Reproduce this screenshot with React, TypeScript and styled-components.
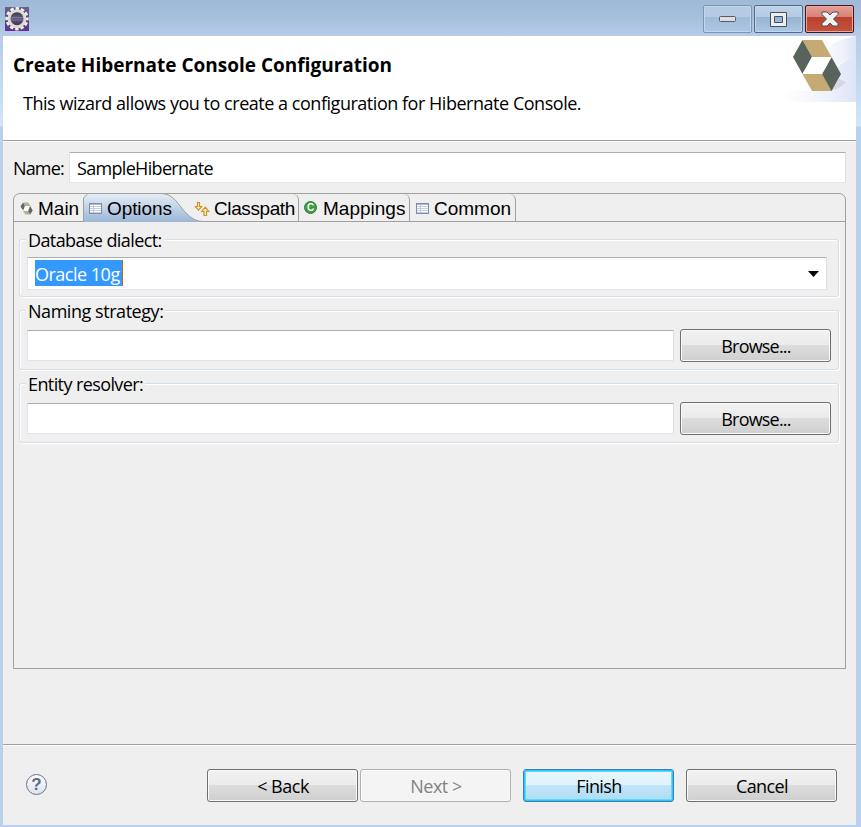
import React from 'react';
import styled, { createGlobalStyle, css } from 'styled-components';

const Global = createGlobalStyle`
  html, body { margin: 0; padding: 0; }
  body { overflow: hidden; background: #efefef; }
  * { box-sizing: border-box; }
  svg { display: block; flex: none; }
`;

const Window = styled.div`
  width: 861px;
  height: 827px;
  padding: 0 5px 2px 3px;
  display: flex;
  flex-direction: column;
  color: #000;
  font: 18px/24px 'Open Sans', 'Noto Sans', sans-serif;
  background: linear-gradient(#9fbad8 0, #a5c0dd 18px, #b6cde7 36px, #c6dbf1 90px, #d4e5f7 126px, #b9d1ec 127px, #b9d1ec 100%);
`;

const Text = styled.span<{ $ls?: number }>`
  white-space: pre;
  letter-spacing: ${p => p.$ls ?? -0.6}px;
`;

const TitleBar = styled.header`
  height: 36px;
  flex: none;
  display: flex;
  justify-content: space-between;
  padding: 7px 2px 0 2px;
`;

const Controls = styled.div`
  display: flex;
  gap: 2px;
  margin-top: -2px;
`;

const Control = styled.button<{ $kind: 'min' | 'max' | 'close' }>`
  width: 49px;
  height: 28px;
  padding: 0;
  border: 1px solid ${p => ({ min: '#7d95b3', max: '#566a85', close: '#431422' })[p.$kind]};
  border-radius: 2px;
  display: flex;
  align-items: center;
  justify-content: center;
  box-shadow: inset 0 0 0 1px ${p => (p.$kind === 'close' ? '#e9a79d' : '#c3d7ec')};
  background: ${p => ({
    min: 'linear-gradient(#b4cbe3 0 43%, #a0bbd8 43%, #adc6e1)',
    max: 'linear-gradient(#bfd2e8, #b4cbe4 43%, #97b3d2 43%, #abc7e4)',
    close: 'linear-gradient(#e4a096, #d98073 43%, #b9412e 43%, #c5523d)',
  })[p.$kind]};
`;

const Banner = styled.section`
  height: 105px;
  flex: none;
  background: #fff;
  border-bottom: 1px solid #a0a0a0;
  display: flex;
  justify-content: space-between;
`;

const BannerText = styled.div`
  padding: 17px 0 0 10px;
`;

const Heading = styled.h1`
  margin: 0;
  font-size: 19px;
  line-height: 24px;
  font-weight: 700;
`;

const Description = styled.p`
  margin: 14px 0 0 10px;
`;

const Body = styled.main`
  height: 603px;
  flex: none;
  background: #efefef;
  border-top: 1px solid #fff;
  padding: 10px 10px 0;
`;

const NameRow = styled.label`
  display: flex;
  align-items: center;
  height: 31px;
`;

const NameLabel = styled.span`
  width: 56px;
  padding-top: 1px;
`;

const Field = styled.div<{ $h: number }>`
  flex: 1;
  height: ${p => p.$h}px;
  display: flex;
  align-items: center;
  padding: 1px 7px 0;
  background: #fff;
  border: 1px solid #e2e3ea;
  border-top-color: #abadb3;
  border-left-color: #e2e3ea;
  border-right-color: #dbdfe6;
  border-radius: 1px;
`;

const Folder = styled.section`
  margin-top: 10px;
  height: 476px;
  border: 1px solid #a0a0a0;
  border-radius: 7px 7px 0 0;
`;

const TabStrip = styled.nav`
  height: 28px;
  display: flex;
  border-bottom: 1px solid #a0a0a0;
  font: 19px/24px 'Liberation Sans', Arial, sans-serif;
`;

const Tab = styled.div<{ $w: number; $active?: boolean; $pad: number; $gap: number }>`
  position: relative;
  width: ${p => p.$w}px;
  height: 27px;
  flex: none;
  display: flex;
  align-items: center;
  gap: ${p => p.$gap}px;
  padding: 2px 0 0 ${p => p.$pad}px;
  ${p => !p.$active && css`
    border-right: 1px solid #a0a0a0;
    border-top-right-radius: 6px;
  `}
  &:first-child { border-right: 0; }
`;

const ActiveShape = styled.svg`
  position: absolute;
  left: 0;
  top: -1px;
  overflow: visible;
`;

const Above = styled.span`
  position: relative;
  display: flex;
`;

const Page = styled.div`
  padding: 5px 6px 5px 5px;
`;

const Group = styled.fieldset<{ $h: number }>`
  margin: 0 0 1px;
  height: ${p => p.$h}px;
  min-width: 0;
  padding: 0;
  border: 0;
  display: grid;
  grid-template-rows: 12px 1fr;
`;

const GroupLabel = styled.div`
  display: flex;
  height: 24px;
  z-index: 1;
  margin: 1px 0 0 7px;
  & > span { background: #efefef; padding: 0 2px; height: 24px; }
`;

const GroupBox = styled.div`
  display: flex;
  align-items: flex-start;
  gap: 6px;
  border: 1px solid #d5dfe5;
  border-radius: 3px;
  box-shadow: inset 1px 1px 0 #fff, 1px 1px 0 #fff;
  padding: 17px 7px 0;
`;

const Combo = styled(Field)`
  justify-content: space-between;
  margin: 0 4px 0 0;
  padding: 1px 7px 0;
`;

const Selected = styled.span`
  height: 26px;
  line-height: 28px;
  width: 88px;
  color: #fff;
  background: #3399ff;
  border-right: 1px solid #cc6600;
  margin-top: -2px;
`;

const Button = styled.button<{ $kind?: 'default' | 'disabled' }>`
  width: 151px;
  height: 33px;
  flex: none;
  padding: 1px 0 0 1px;
  font: inherit;
  color: #000;
  border: 1px solid #707070;
  border-radius: 3px;
  box-shadow: inset 0 0 0 1px #fafafa;
  background: linear-gradient(#f2f2f2, #ebebeb 48%, #dddddd 48%, #cfcfcf);
  ${p => p.$kind === 'default' && css`
    border-color: #3c7fb1;
    box-shadow: inset 0 0 0 1px #28c8fa, inset 0 0 0 2px #60d8fb;
    background: linear-gradient(#eaf6fd, #e0f3fd 48%, #c2e5f9 48%, #afdcf3);
  `}
  ${p => p.$kind === 'disabled' && css`
    color: #838383;
    border-color: #adb2b5;
    background: #f4f4f4;
  `}
`;

const BrowseSlot = styled.div`
  margin-top: 1px;
  display: flex;
`;

const PathField = styled(Field)`
  margin-top: 2px;
`;

const Footer = styled.footer`
  flex: 1;
  background: #efefef;
  border-top: 1px solid #a0a0a0;
  box-shadow: inset 0 1px 0 #fff;
  display: flex;
  align-items: flex-start;
  padding: 24px 19px 0 23px;
`;

const Help = styled.div`
  padding-top: 5px;
  margin-right: auto;
`;

const ButtonPair = styled.div`
  display: flex;
  gap: 2px;
  margin-right: 12px;
`;

const FinishSlot = styled.div`
  display: flex;
  gap: 12px;
`;

const GearIcon = () => (
  <svg width="24" height="24" viewBox="0 0 24 24">
    <defs>
      <linearGradient id="gearBack" x2="0" y2="1"><stop stopColor="#6b6290" /><stop offset=".5" stopColor="#544685" /><stop offset="1" stopColor="#65318f" /></linearGradient>
      <linearGradient id="gearCore" x2="0" y2="1"><stop stopColor="#2c2b3e" /><stop offset=".45" stopColor="#655d80" /><stop offset="1" stopColor="#352c59" /></linearGradient>
    </defs>
    <rect width="24" height="24" fill="url(#gearBack)" />
    <circle cx="12" cy="11.7" r="10.1" fill="none" stroke="#f2f0e8" strokeWidth="3.2" strokeDasharray="3.4 1.89" strokeDashoffset="1.7" />
    <circle cx="12" cy="11.7" r="8" fill="url(#gearCore)" stroke="#dddbd2" strokeWidth="3" />
    <path d="M6 10.5h12M5.7 13h12.6" stroke="#8b84a2" strokeWidth=".7" />
  </svg>
);

const HibernateLogo = () => (
  <svg width="72" height="66" viewBox="0 0 72 66">
    <defs>
      <linearGradient id="swoosh"><stop stopColor="#fff" /><stop offset=".65" stopColor="#edf1fb" /><stop offset="1" stopColor="#dce4f6" /></linearGradient>
    </defs>
    <path d="M0 55H38Q50 27 72 20V66H0Z" fill="url(#swoosh)" />
    <path d="M36 17Q49 4 72 0V21Q58 24 46 36Z" fill="url(#swoosh)" />
    <path d="M47 55Q57 52 62 46L55 43Z" fill="#d4d8e6" />
    <path d="M18.5 4H38L47.500 21H28Z M18.500 38H38L48 55H28Z" fill="#c5aa73" />
    <path d="M18.500 4L28 21L18.500 38L9 21Z M47.500 21L57 38L47.500 55L38 38Z" fill="#58645b" />
    <path d="M28 21H47.500L38 38H18.500Z" fill="#fff" />
  </svg>
);

const MainIcon = () => (
  <svg width="13" height="13" viewBox="0 0 13 13">
    <path d="M3 .5H8L10.5 4H5Z M3 9H8L10.5 12.5H5.5Z" fill="#b8ae88" />
    <path d="M3 .5L5 4L3.2 8.5L.5 4.5Z M10.2 4L12.7 8.4L10.2 12.5L8 8.8Z" fill="#5d6a69" />
    <path d="M5 4H9.4L8 9H3.4Z" fill="#fff" />
  </svg>
);

const TableIcon = () => (
  <svg width="13" height="11" viewBox="0 0 13 11">
    <rect x=".5" y=".5" width="12" height="10" fill="#fff" stroke="#7d8db2" />
    <path d="M1 1.5H12" stroke="#acb9d5" />
    <path d="M1 3.5H12M1 5.5H12M1 7.5H12M1 9.5H12M4.5 2V10" stroke="#b5bfd4" strokeWidth=".8" />
  </svg>
);

const ArrowsIcon = () => (
  <svg width="16" height="14" viewBox="0 0 16 14">
    <path d="M3.5 .5H5.5V4.5H7.7L4.5 8.2L1.2 4.5H3.5Z M10 13.5V9.5H7.7L11.3 5.2L14.8 9.5H12.5V13.5Z" fill="#fff0b4" stroke="#c6952f" strokeWidth="1.2" />
  </svg>
);

const ClassLetter = styled.span`
  width: 13px;
  height: 13px;
  border: 1px solid #2d7f3e;
  border-radius: 50%;
  background: #3d9c43;
  color: #fff;
  font: 700 10px/11px 'Liberation Sans', sans-serif;
  text-align: center;
  margin-top: -3px;
`;

const HelpRing = styled.div`
  width: 21px;
  height: 21px;
  border: 1.5px solid #64748f;
  border-radius: 50%;
  background: linear-gradient(#fcfcfc, #e1e4e9);
  color: #596b8d;
  font: 700 17px/19px 'Liberation Sans', sans-serif;
  text-align: center;
`;

const BrowseGroup = ({ label, ls }: { label: string; ls: number }) => (
  <Group $h={72}>
    <GroupLabel><Text $ls={ls}>{label}</Text></GroupLabel>
    <GroupBox>
      <PathField $h={31} />
      <BrowseSlot><Button><Text $ls={-0.8}>Browse...</Text></Button></BrowseSlot>
    </GroupBox>
  </Group>
);

export default function App() {
  return (
    <>
      <Global />
      <Window>
        <TitleBar>
          <GearIcon />
          <Controls>
            <Control $kind="min" aria-label="Minimize">
              <svg width="17" height="6"><rect x=".5" y=".5" width="16" height="5" rx="1" fill="#dedede" stroke="#545966" /></svg>
            </Control>
            <Control $kind="max" aria-label="Maximize">
              <svg width="17" height="15"><path fillRule="evenodd" d="M.5 .5H16.5V14.5H.5Z M4.5 4.5V10.5H12.5V4.5Z" fill="#eee" stroke="#454f60" /></svg>
            </Control>
            <Control $kind="close" aria-label="Close">
              <svg width="18" height="16"><path d="M1 1H6L9 4L12 1H17V3.5L12.5 8L17 12.5V15H12L9 12L6 15H1V12.5L5.5 8L1 3.5Z" fill="#f1f1f1" stroke="#4e4e5d" strokeLinejoin="round" /></svg>
            </Control>
          </Controls>
        </TitleBar>
        <Banner>
          <BannerText>
            <Heading><Text $ls={0}>Create Hibernate Console Configuration</Text></Heading>
            <Description><Text $ls={-0.47}>This wizard allows you to create a configuration for Hibernate Console.</Text></Description>
          </BannerText>
          <HibernateLogo />
        </Banner>
        <Body>
          <NameRow>
            <NameLabel><Text $ls={-0.85}>Name:</Text></NameLabel>
            <Field $h={31}><Text $ls={-0.68}>SampleHibernate</Text></Field>
          </NameRow>
          <Folder>
            <TabStrip>
              <Tab $w={69} $pad={6} $gap={5}><MainIcon /><Text $ls={0}>Main</Text></Tab>
              <Tab $w={105} $pad={6} $gap={5} $active>
                <ActiveShape width="124" height="29" viewBox="0 0 124 29">
                  <defs><linearGradient id="tabFill" x2="0" y2="1"><stop stopColor="#e6edf6" /><stop offset="1" stopColor="#9cb7d7" /></linearGradient></defs>
                  <path d="M.5 29V5L5 .5H78C91 .5 96 13 103 20Q111 28.5 120 28.5V29Z" fill="url(#tabFill)" />
                  <path d="M.5 29V5L5 .5H78C91 .5 96 13 103 20Q111 28.5 120 28.5" fill="none" stroke="#a0a0a0" />
                </ActiveShape>
                <Above><TableIcon /></Above><Above><Text $ls={-0.1}>Options</Text></Above>
              </Tab>
              <Tab $w={111} $pad={6} $gap={4}><ArrowsIcon /><Text $ls={-0.4}>Classpath</Text></Tab>
              <Tab $w={111} $pad={5} $gap={6}><ClassLetter>C</ClassLetter><Text $ls={0}>Mappings</Text></Tab>
              <Tab $w={106} $pad={6} $gap={5}><TableIcon /><Text $ls={0}>Common</Text></Tab>
            </TabStrip>
            <Page>
              <Group $h={70}>
                <GroupLabel><Text>Database dialect:</Text></GroupLabel>
                <GroupBox>
                  <Combo $h={33}>
                    <Selected><Text $ls={-0.5}>Oracle 10g</Text></Selected>
                    <svg width="11" height="6"><path d="M0 0H11L5.5 6Z" fill="#000" /></svg>
                  </Combo>
                </GroupBox>
              </Group>
              <BrowseGroup label="Naming strategy:" ls={-0.45} />
              <BrowseGroup label="Entity resolver:" ls={-0.6} />
            </Page>
          </Folder>
        </Body>
        <Footer>
          <Help><HelpRing>?</HelpRing></Help>
          <ButtonPair>
            <Button><Text $ls={-0.5}>{'< Back'}</Text></Button>
            <Button $kind="disabled" disabled><Text $ls={-0.5}>{'Next >'}</Text></Button>
          </ButtonPair>
          <FinishSlot>
            <Button $kind="default"><Text>Finish</Text></Button>
            <Button><Text>Cancel</Text></Button>
          </FinishSlot>
        </Footer>
      </Window>
    </>
  );
}
